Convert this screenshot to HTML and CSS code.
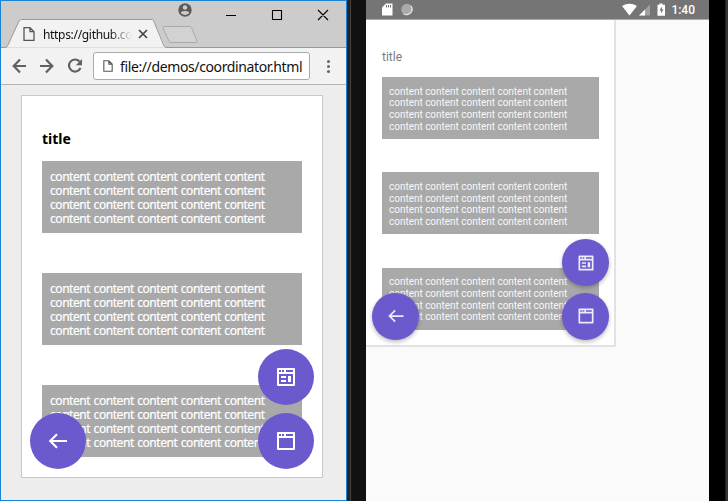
FILE: index.html
```
<!DOCTYPE html>
<html lang="en">
<head>
<meta charset="utf-8">
<title>Coordinator demo</title>
<link rel="stylesheet" href="styles.css">
</head>
<body>
<svg class="defs" aria-hidden="true">
  <symbol id="back" viewBox="0 0 24 24"><path d="M21 12H4.5M11 5.2L4.2 12l6.8 6.8" fill="none" stroke="currentColor" stroke-width="2.100"/></symbol>
  <symbol id="page" viewBox="0 0 12 14"><path d="M1 .7h6l4 4v8.6H1zM7 .7v4h4" fill="none" stroke="currentColor" stroke-width="1.3"/></symbol>
  <symbol id="window" viewBox="0 0 24 24"><path fill="currentColor" fill-rule="evenodd" d="M4 3h16q1 0 1 1v16q0 1-1 1H4q-1 0-1-1V4q0-1 1-1zM5 9v10h14V9zM5 5v2h2V5zM8 5v2h2V5zM12 5v2h7V5z"/></symbol>
  <symbol id="layout" viewBox="0 0 24 24"><path fill="currentColor" fill-rule="evenodd" d="M4 3h16q1 0 1 1v16q0 1-1 1H4q-1 0-1-1V4q0-1 1-1zM5 9v10h14V9zM5 5v2h2V5zM8 5v2h2V5zM12 5v2h7V5z"/><path fill="currentColor" d="M7 11h5v2H7zM7 15h5v2H7zM14 11h3v6h-3z"/></symbol>
</svg>
<main class="stage">
  <section class="browser">
    <header class="tabs">
      <svg class="tab-art" width="345" height="47" viewBox="1 1 345 47">
        <path d="M1 47.5H6.500L19.500 20.500Q20 19.500 21.500 19.500H151Q153 19.500 153.500 20.500L165.500 47.500" fill="#f2f2f2"/>
        <path d="M1 47.500H5Q7 47.500 8 45L19 21Q20 19.500 21.500 19.500H151Q153 19.500 153.500 20.500L164 46Q165 47.500 167 47.500H346" fill="none" stroke="#999"/>
        <path d="M164 26.500H190Q191 26.500 191.500 27.500L197 41Q197 42.500 196 42.500H171Q169.500 42.500 169 41L163 28Q163 26.500 164 26.500z" fill="#d2d2d2" stroke="#aaa"/>
        <circle cx="185" cy="10" r="6.700" fill="#5a5a5a"/><circle cx="185" cy="7.500" r="2.200" fill="#ccc"/><path d="M180.800 13q0-2 4.200-2t4.200 2q-4.200 4-8.400 0" fill="#ccc"/>
        <path d="M226 15.500h10M272.500 10.500h9v9h-9zM318 10l10 10M328 10l-10 10" fill="none" stroke="#000" stroke-width="1.100"/>
        <path d="M139 30l8 8M147 30l-8 8" stroke="#444" stroke-width="1.700"/>
      </svg>
      <div class="tab"><svg class="tab-page"><use href="#page"/></svg><span class="tab-title">https://github.co</span></div>
    </header>
    <div class="toolbar">
      <svg width="80" height="20" viewBox="0 0 80 20" fill="none" stroke="#5f6063" stroke-width="2.200">
        <path d="M15 10H3M9 3.500L2.700 10L9 16.500M29 10h12M35 3.500l6.300 6.500L35 16.500"/>
        <path d="M68.500 5.500A6 6 0 1 0 69.500 12"/><path d="M71 3v6.200h-6.200z" fill="#5f6063" stroke="none"/>
      </svg>
      <div class="address"><svg class="address-page"><use href="#page"/></svg><span>file://demos/coordinator.html</span></div>
      <i class="menu"></i>
    </div>
    <div class="viewport">
      <article class="card">
        <h1>title</h1>
        <div class="block">content content content content content<br>content content content content content<br>content content content content content<br>content content content content content</div>
        <div class="block">content content content content content<br>content content content content content<br>content content content content content<br>content content content content content</div>
        <div class="block">content content content content content<br>content content content content content<br>content content content content content<br>content content content content content</div>
        <span class="fab left"><svg><use href="#back"/></svg></span>
        <span class="fab upper"><svg><use href="#layout"/></svg></span>
        <span class="fab"><svg><use href="#window"/></svg></span>
      </article>
    </div>
  </section>
  <section class="phone">
    <div class="screen">
      <header class="status">
        <svg width="32" height="14" viewBox="0 0 32 14"><path d="M4 0.500h6.500v12H0V4.500z" fill="#fff"/><path d="M4.500 2v2.500M6.500 2v2.500M8.500 2v2.500" stroke="#757575"/><circle cx="25" cy="6.500" r="5.700" fill="#aaa"/><path d="M29 3A5.500 5.500 0 0 1 21.500 10.700" fill="none" stroke="#e5e5e5" stroke-width="1.300"/></svg>
        <span class="status-right"><svg width="44" height="14" viewBox="0 0 44 14"><path d="M0 3Q7.500-1.500 15 3L7.500 12.500z" fill="#fff"/><path d="M28 1.500v11H17z" fill="#a0a0a0"/><path d="M23 6.500v6h-6z" fill="#fff"/><path d="M37.500 .5h3v1.300H43v11h-7.500v-11h2z" fill="#fff"/><path d="M40 3.500l-2.500 4H39v3l2.500-4H40z" fill="#757575"/></svg><b>1:40</b></span>
      </header>
      <article class="card">
        <h1>title</h1>
        <div class="block">content content content content content<br>content content content content content<br>content content content content content<br>content content content content content</div>
        <div class="block">content content content content content<br>content content content content content<br>content content content content content<br>content content content content content</div>
        <div class="block">content content content content content<br>content content content content content<br>content content content content content<br>content content content content content</div>
        <span class="fab left"><svg><use href="#back"/></svg></span>
        <span class="fab upper"><svg><use href="#layout"/></svg></span>
        <span class="fab"><svg><use href="#window"/></svg></span>
      </article>
    </div>
  </section>
</main>
</body>
</html>
```
FILE: styles.css
```
* { box-sizing: border-box; }
body { margin: 0; overflow: hidden; background: #111; }
svg { display: block; flex: none; }
.defs { position: absolute; width: 0; height: 0; }
.stage { display: flex; width: 728px; height: 501px; }
.browser { width: 347px; border: 1px solid #1883d7; background: #ededed; font-family: "Noto Sans", sans-serif; }
.tabs { position: relative; height: 47px; background: #ccc; }
.tab-art { position: absolute; inset: 0; }
.tab { position: relative; display: flex; align-items: center; gap: 8px; padding: 19px 0 0 22px; height: 47px; width: 131px; color: #555; }
.tab-page { width: 12px; height: 14px; }
.tab-title { overflow: hidden; white-space: nowrap; font-size: 12px; letter-spacing: -.32px; color: #111; -webkit-mask-image: linear-gradient(90deg, #000 75%, transparent); mask-image: linear-gradient(90deg, #000 75%, transparent); }
.toolbar { display: flex; align-items: center; height: 37px; padding-left: 10px; background: #f2f2f2; border-bottom: 1px solid #b5b5b5; }
.address { display: flex; align-items: center; gap: 7px; width: 217px; height: 28px; margin-left: 2px; padding-left: 9px; border: 1px solid #aaa; border-radius: 3px; background: #fff; font-size: 14px; letter-spacing: -.38px; white-space: nowrap; color: #111; }
.address-page { width: 10px; height: 12px; color: #555; }
.menu { width: 3px; height: 3px; margin-left: 17px; border-radius: 50%; background: #666; box-shadow: 0 -5px #666, 0 5px #666; }
.viewport { padding: 10px 20px; }
.card { position: relative; width: 302px; height: 383px; padding: 34px 20px 20px; border: 1px solid #c9c9c9; background: #fff; }
.card h1 { margin: 0 0 13px; font-size: 14px; line-height: 18px; }
.block { height: 72px; margin-bottom: 40px; padding: 9px 8px 7px; background: #a9a9a9; color: #fff; font-size: 12px; line-height: 14px; letter-spacing: -.44px; word-spacing: .7px; white-space: nowrap; -webkit-text-stroke: .2px #fff; }
.fab { position: absolute; right: 8px; bottom: 8px; display: flex; align-items: center; justify-content: center; width: 56px; height: 56px; border-radius: 50%; background: #6a5acd; color: #fff; }
.fab svg { width: 24px; height: 24px; }
.fab.left { left: 8px; right: auto; }
.fab.upper { bottom: 72px; }
.phone { width: 381px; padding: 0 19px; background: linear-gradient(90deg, #222 0 3px, #444 3px 4px, #111 4px 19px, #000 19px 378px, #222 378px 379px, #333 379px); font-family: Roboto, sans-serif; }
.screen { height: 501px; background: #fafafa; }
.status { display: flex; justify-content: space-between; height: 20px; padding: 3px 14px 0 16px; border-bottom: 1px solid #aaa; background: #757575; }
.status-right { display: flex; gap: 5px; color: #fff; font-size: 12px; line-height: 14px; }
.status-right b { font-weight: 500; }
.phone .card { width: 250px; height: 327px; padding: 29px 15px 0 16px; border-width: 0 2px 2px 0; border-color: #e2e2e2; }
.phone h1 { margin-bottom: 12px; font-size: 12px; line-height: 16px; font-weight: 400; color: #7b7b7b; }
.phone .block { width: 217px; height: 62px; margin-bottom: 33.300px; padding: 8.500px 7px 7px; font-size: 10px; line-height: 11.700px; letter-spacing: -.02px; word-spacing: 0; color: #f7f7f7; -webkit-text-stroke: 0; }
.phone .fab { right: 5px; bottom: 5.500px; width: 46.700px; height: 46.700px; box-shadow: 0 2px 4px #0004; color: #eeebfa; }
.phone .fab.left { left: 6.300px; right: auto; }
.phone .fab.upper { bottom: 59px; }
.phone .fab svg { width: 20px; height: 20px; }
```
